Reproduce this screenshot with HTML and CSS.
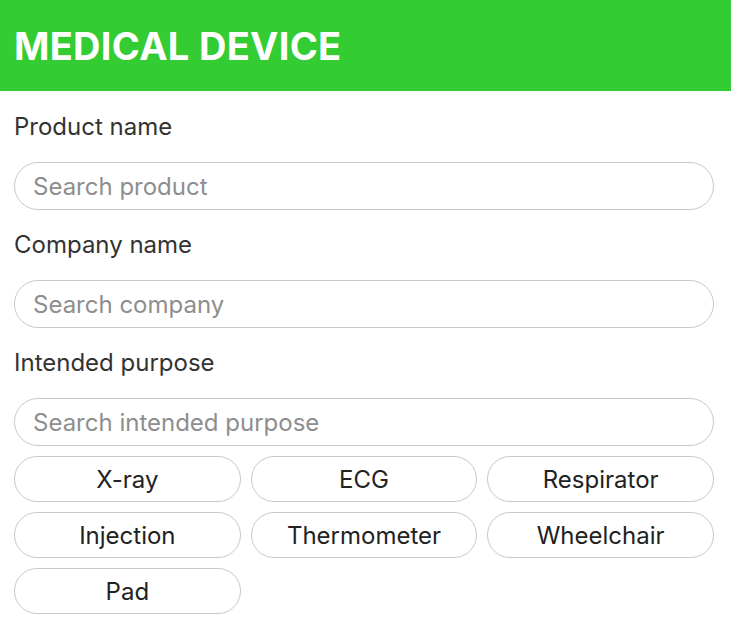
FILE: index.html
```html
<!DOCTYPE html>
<html lang="en">
<head>
    <meta charset="UTF-8">
    <meta name="viewport" content="width=device-width, initial-scale=1.0">
    <title>Medical Device</title>
    <link rel="stylesheet" href="styles.css">
</head>
<body>

    <header class="topbar">
        <h1>MEDICAL DEVICE</h1>
    </header>

    <section class="search-form">
        <label class="field-label" for="product">Product name</label>
        <input class="search-input" id="product" type="text" placeholder="Search product">

        <label class="field-label" for="company">Company name</label>
        <input class="search-input" id="company" type="text" placeholder="Search company">

        <label class="field-label" for="purpose">Intended purpose</label>
        <input class="search-input" id="purpose" type="text" placeholder="Search intended purpose">

        <div class="chip-grid">
            <button class="chip">X-ray</button>
            <button class="chip">ECG</button>
            <button class="chip">Respirator</button>
            <button class="chip">Injection</button>
            <button class="chip">Thermometer</button>
            <button class="chip">Wheelchair</button>
            <button class="chip">Pad</button>
        </div>
    </section>

</body>
</html>
```

FILE: styles.css
```css
/* General Styles */
body {
    font-family: Inter, "Liberation Sans", sans-serif;
    margin: 0;
    padding: 0;
    background: white;
    color: #333;
}

/* Header */
.topbar {
    background: #33cc33;
    height: 91px;
    padding: 0 14px;
    display: flex;
    align-items: center;
}
.topbar h1 {
    margin: 0;
    color: white;
    font-size: 38px;
    font-weight: 700;
    letter-spacing: 0.3px;
}

/* Form */
.search-form {
    padding: 1px 17px 0 14px;
    display: flex;
    flex-direction: column;
}
.field-label {
    font-size: 24px;
    line-height: 28px;
    margin: 21px 0;
    color: #333;
}
.search-input {
    height: 48px;
    box-sizing: border-box;
    border: 1px solid #c8c8c8;
    border-radius: 24px;
    padding: 0 18px;
    font-family: inherit;
    font-size: 24px;
    color: #333;
    outline: none;
}
.search-input::placeholder {
    color: #8e8e8e;
}

/* Chips */
.chip-grid {
    display: grid;
    grid-template-columns: repeat(3, 1fr);
    gap: 10px;
    margin-top: 10px;
}
.chip {
    height: 46px;
    background: white;
    border: 1px solid #c8c8c8;
    border-radius: 23px;
    font-family: inherit;
    font-size: 24px;
    color: #222;
    cursor: pointer;
}
.chip:hover {
    background: #f2f2f2;
}
```
